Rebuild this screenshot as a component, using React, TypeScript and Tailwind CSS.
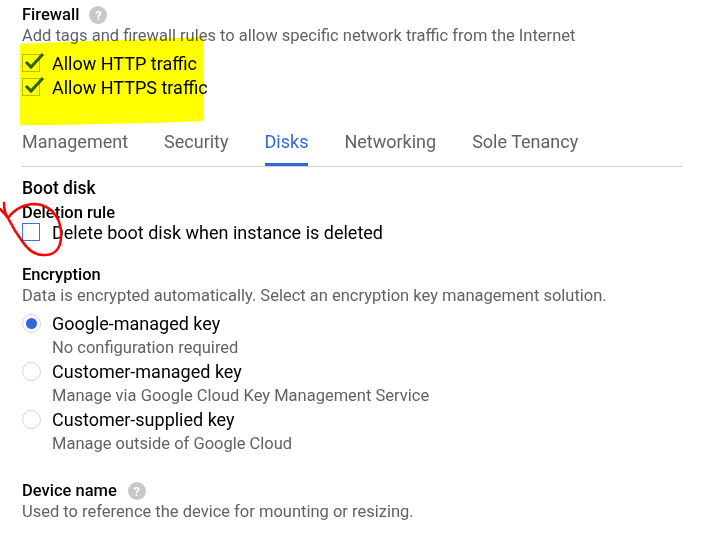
import React from "react";

const Help = () => (
  <span className="inline-flex h-[18px] w-[18px] items-center justify-center rounded-full bg-[#c8c8c8] text-[13px] font-bold leading-none text-white">
    ?
  </span>
);

const Radio = ({ checked }: { checked?: boolean }) => (
  <span className="flex h-[19px] w-[19px] items-center justify-center rounded-full border border-[#d6d6d6] bg-white">
    {checked && <span className="h-[11px] w-[11px] rounded-full bg-[#3367d6]" />}
  </span>
);

const CheckedBox = () => (
  <span className="relative block h-[18px] w-[18px] shrink-0 border border-[#bdbdbd]">
    <svg className="absolute left-[1px] top-[-4px]" width="21" height="19" viewBox="0 0 21 19">
      <path d="M2 11 L7 16 L19 3" fill="none" stroke="#2f5f22" strokeWidth="3" />
    </svg>
  </span>
);

const RadioRow = ({ label, sub, checked }: { label: string; sub: string; checked?: boolean }) => (
  <div>
    <div className="flex h-[24px] items-center gap-[11px] pb-[2px]">
      <Radio checked={checked} />
      <span className="text-[18px]">{label}</span>
    </div>
    <div className="flex h-[24px] items-center pl-[30px] text-[16.5px] text-[#5f6368]">{sub}</div>
  </div>
);

export default function App() {
  const tabs = ["Management", "Security", "Disks", "Networking", "Sole Tenancy"];
  return (
    <div
      className="relative h-[534px] w-[712px] overflow-hidden bg-white pl-[22px] text-black"
      style={{ fontFamily: "Roboto, 'Liberation Sans', sans-serif" }}
    >
      <div className="mt-[5px] flex h-[20px] items-center gap-[10px]">
        <span className="text-[16.5px] font-medium">Firewall</span>
        <Help />
      </div>
      <div className="mt-[1px] flex h-[20px] items-center text-[16.5px] text-[#5f6368]">
        Add tags and firewall rules to allow specific network traffic from the Internet
      </div>
      <div className="mt-[5px] flex h-[24px] items-center gap-[12px]">
        <CheckedBox />
        <span className="text-[18px]">Allow HTTP traffic</span>
      </div>
      <div className="flex h-[24px] items-center gap-[12px]">
        <CheckedBox />
        <span className="text-[18px]">Allow HTTPS traffic</span>
      </div>

      <div className="mr-[30px] mt-[25px] flex h-[43px] gap-[36px] border-b border-[#cfcfcf]">
        {tabs.map((t) => (
          <div
            key={t}
            className={
              "relative flex h-[42px] items-center pb-[8px] text-[18px] " +
              (t === "Disks" ? "text-[#3367d6]" : "text-[#5f6368]")
            }
          >
            {t}
            {t === "Disks" && (
              <span className="absolute bottom-0 left-0 right-0 h-[3px] bg-[#3367d6]" />
            )}
          </div>
        ))}
      </div>

      <div className="mt-[11px] flex h-[20px] items-center text-[17.5px] font-medium">Boot disk</div>
      <div className="mt-[6px] flex h-[18px] items-center text-[16.5px] font-medium">Deletion rule</div>
      <div className="flex h-[20px] items-center gap-[12px]">
        <span className="block h-[18px] w-[18px] border border-[#3f6fd8]" />
        <span className="text-[18px]">Delete boot disk when instance is deleted</span>
      </div>

      <div className="mt-[23px] flex h-[20px] items-center text-[16.5px] font-medium">Encryption</div>
      <div className="mt-[1px] flex h-[20px] items-center text-[16.5px] text-[#5f6368]">
        Data is encrypted automatically. Select an encryption key management solution.
      </div>
      <div className="mt-[6px]">
        <RadioRow checked label="Google-managed key" sub="No configuration required" />
        <RadioRow label="Customer-managed key" sub="Manage via Google Cloud Key Management Service" />
        <RadioRow label="Customer-supplied key" sub="Manage outside of Google Cloud" />
      </div>

      <div className="mt-[25px] flex h-[20px] items-center gap-[11px]">
        <span className="text-[16.5px] font-medium">Device name</span>
        <Help />
      </div>
      <div className="mt-[1px] flex h-[20px] items-center text-[16.5px] text-[#5f6368]">
        Used to reference the device for mounting or resizing.
      </div>

      <svg
        className="pointer-events-none absolute left-0 top-0 mix-blend-multiply"
        width="712"
        height="534"
        viewBox="0 0 712 534"
      >
        <polygon
          points="20,44 60,42 120,40 203,37 204,80 203,121 150,123 100,124 60,125 20,125"
          fill="#ffff00"
        />
      </svg>
      <svg
        className="pointer-events-none absolute left-0 top-0"
        width="712"
        height="534"
        viewBox="0 0 712 534"
      >
        <path
          d="M4 203 C4 209 5 214 8 218 C14 210 23 204 35 204 C50 205 60 216 61 232 C62 247 56 255 45 255 C35 256 28 250 22 241 C16 233 12 226 8 218 C5 214 2 211 0 209"
          fill="none"
          stroke="#ff0000"
          strokeWidth="2.5"
          strokeLinecap="round"
        />
      </svg>
    </div>
  );
}
